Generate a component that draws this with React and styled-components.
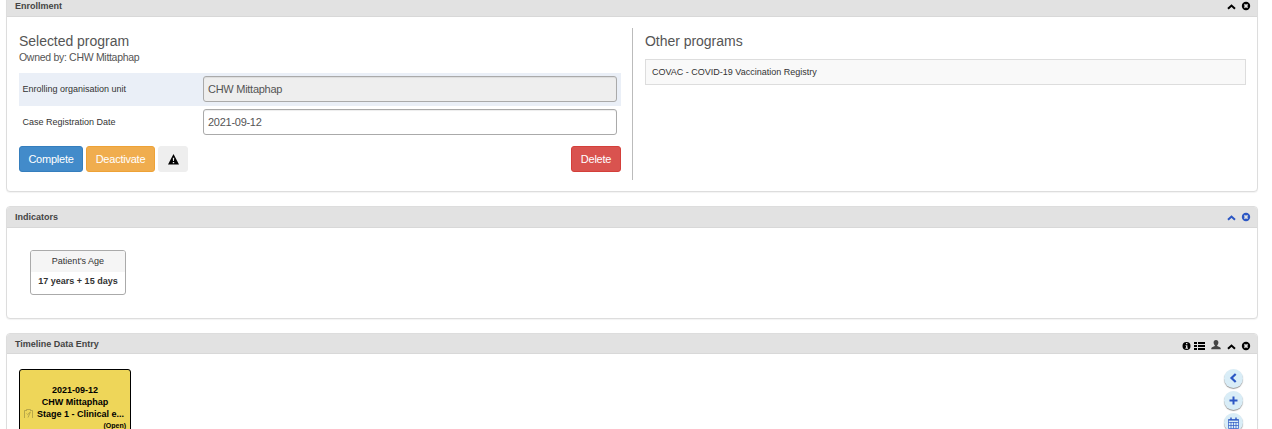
import React from "react";
import styled, { createGlobalStyle } from "styled-components";

const Global = createGlobalStyle`
  *, *::before, *::after { box-sizing: border-box; }
  html, body { margin: 0; background: #fff; overflow: hidden; }
  body { font-family: "Liberation Sans", Arial, sans-serif; font-size: 9px; color: #333; }
`;

const Page = styled.div`
  height: 429px;
  overflow: hidden;
`;

const Stack = styled.main`
  display: flex;
  flex-direction: column;
  gap: 14px;
  width: 1252px;
  margin: -5px 0 0 6px;
`;

const Panel = styled.section`
  flex: none;
  height: ${(p) => p.$height}px;
  border: 1px solid #ddd;
  border-radius: 4px;
  background: #fff;
  box-shadow: 0 1px 1px rgba(0, 0, 0, 0.05);
`;

const PanelHeader = styled.header`
  display: flex;
  justify-content: space-between;
  height: ${(p) => p.$height}px;
  padding: 0 6px 0 8px;
  border-bottom: 1px solid #d8d8d8;
  border-radius: 3px 3px 0 0;
  background: #e2e2e2;
  line-height: 20px;
  font-weight: bold;
  color: #444;
`;

const HeaderIcons = styled.div`
  display: flex;
  align-items: center;
  padding-top: ${(p) => p.$drop || 0}px;
  color: ${(p) => p.$color || "#000"};
  svg { display: block; }
`;

const ListSlot = styled.span`
  margin-left: 3px;
`;

const PersonSlot = styled.span`
  margin: 0 3px 2px 6px;
`;

const EnrollBody = styled.div`
  display: flex;
  padding: 11px 11px 0 12px;
`;

const Selected = styled.div`
  width: 614px;
  height: 152px;
  padding-right: 11px;
  border-right: 1px solid #bbb;
`;

const Others = styled.div`
  flex: 1;
  padding-left: 12px;
`;

const Title = styled.h2`
  margin: 0;
  padding-top: 4px;
  font-size: 14px;
  line-height: 18px;
  font-weight: normal;
  letter-spacing: -0.03px;
  color: #555;
`;

const Owner = styled.p`
  margin: 0 0 8px;
  font-size: 10.5px;
  line-height: 15px;
  letter-spacing: -0.3px;
  color: #555;
`;

const Field = styled.div`
  display: flex;
  align-items: center;
  height: 33px;
  padding: 0 4px 1px 3.5px;
  background: ${(p) => (p.$shaded ? "#eaeff7" : "#fff")};
`;

const Label = styled.label`
  flex: 1;
`;

const Input = styled.div`
  width: 414px;
  height: 26px;
  padding: 0 4px;
  border: 1px solid #aaa;
  border-radius: 3px;
  background: ${(p) => (p.$disabled ? "#eee" : "#fff")};
  box-shadow: inset 0 1px 1px rgba(0, 0, 0, 0.075);
  font-size: 11px;
  line-height: 25px;
  letter-spacing: -0.27px;
  color: #555;
`;

const Actions = styled.div`
  display: flex;
  gap: 3px;
  margin-top: 7px;
`;

const Button = styled.button`
  display: flex;
  align-items: center;
  justify-content: center;
  width: ${(p) => p.$width}px;
  height: 26px;
  margin: 0 0 0 ${(p) => (p.$end ? "auto" : "0")};
  padding: 0;
  border: 1px solid ${(p) => p.$edge};
  border-radius: 3px;
  background: ${(p) => p.$fill};
  font: 11px "Liberation Sans", Arial, sans-serif;
  letter-spacing: -0.23px;
  color: #fff;
`;

const ProgramRow = styled.div`
  height: 26px;
  margin-top: 9px;
  padding-left: 6px;
  border: 1px solid #ddd;
  background: #f9f9f9;
  line-height: 25px;
`;

const Indicator = styled.div`
  width: 96px;
  height: 45px;
  margin: 22px 0 0 23px;
  border: 1px solid #aaa;
  border-radius: 3px;
  overflow: hidden;
  text-align: center;
`;

const IndicatorName = styled.div`
  height: 21px;
  line-height: 21px;
  background: #f5f5f5;
`;

const IndicatorValue = styled.div`
  line-height: 19px;
  font-weight: bold;
`;

const TimelineBody = styled.div`
  display: flex;
  justify-content: space-between;
  padding: 15px 14px 0 12px;
`;

const Event = styled.div`
  width: 112px;
  height: 72px;
  padding: 14px 4px 0;
  border: 1px solid #000;
  border-radius: 3px;
  background: #eed659;
  color: #000;
  font-weight: bold;
  line-height: 12px;
  text-align: center;
`;

const Stage = styled.div`
  display: flex;
  gap: 4px;
  white-space: nowrap;
`;

const Status = styled.div`
  font-size: 7px;
  line-height: 11px;
  text-align: right;
`;

const Tools = styled.div`
  display: flex;
  flex-direction: column;
  gap: 3px;
`;

const Round = styled.div`
  display: flex;
  align-items: center;
  justify-content: center;
  width: 19px;
  height: 19px;
  border-radius: 50%;
  background: #d9edf7;
  box-shadow: 0 1px 1px #999;
  color: #2c57c4;
`;

const Up = () => (
  <svg width="17" height="10" viewBox="0 0 17 10" fill="none">
    <path d="M4 7.800 7.500 4.500l3.500 3.300" stroke="currentColor" strokeWidth="2" />
  </svg>
);

const Close = () => (
  <svg width="10" height="10" viewBox="0 0 10 10">
    <circle cx="5" cy="5" r="4.200" fill="currentColor" />
    <path d="m3.400 3.400 3.200 3.200m0-3.200-3.200 3.200" stroke="#e2e2e2" strokeWidth="1.500" />
  </svg>
);

const Info = () => (
  <svg width="9" height="10" viewBox="0 0 9 10">
    <circle cx="4.500" cy="5" r="4" fill="currentColor" />
    <path d="M4 2h1.400v1.200H4zM3.500 4.200h1.900v2.600H6v.9H3.400v-.9H4V5h-.5z" fill="#e2e2e2" />
  </svg>
);

const List = () => (
  <svg width="11" height="10" viewBox="0 0 11 10" fill="currentColor">
    <path d="M0 1h3v2H0zM4 1h7v2H4zM0 4h3v2H0zM4 4h7v2H4zM0 7h3v2H0zM4 7h7v2H4z" />
  </svg>
);

const Person = () => (
  <svg width="10" height="10" viewBox="0 0 10 10" fill="#444">
    <path d="M5 0c1.600 0 2.400 1 2.400 2.400 0 1.200-.5 2.200-1.200 2.800v.9l2.700 1.100c.5.2.8.6.8 1V9.200H.3v-1c0-.4.3-.8.8-1l2.700-1.100v-.9C3.100 4.600 2.600 3.600 2.600 2.400 2.600 1 3.400 0 5 0z" />
  </svg>
);

const Warning = () => (
  <svg width="13" height="11" viewBox="0 0 12 11">
    <path d="M6 0 11.500 10.500H.5z" fill="#000" />
    <path d="M5.300 3.700h1.400l-.2 3.200h-1zM5.300 7.900h1.400v1.300H5.300z" fill="#eee" />
  </svg>
);

const Clipboard = () => (
  <svg width="9" height="11" viewBox="0 0 9 11" fill="none" stroke="#a99a45" strokeWidth=".8">
    <path d="M2 2.500H.5v7.500M7 2.500h1.500v7.500M2.500 3V1.500h4V3M2.600 5.500l1 1 2.800-2.500L4 9.500" />
  </svg>
);

const Left = () => (
  <svg width="11" height="11" viewBox="0 0 11 11" fill="none">
    <path d="M7.700 1 3.500 5l4.200 4" stroke="currentColor" strokeWidth="2.200" />
  </svg>
);

const Plus = () => (
  <svg width="9" height="9" viewBox="0 0 9 9">
    <path d="M.5 3.500h3v-3h2v3h3v2h-3v3h-2v-3h-3z" fill="currentColor" />
  </svg>
);

const Calendar = () => (
  <svg width="11" height="12" viewBox="0 0 11 12" fill="none" stroke="currentColor">
    <path d="M.5 2.500h10v9H.5zM.5 5.500h10M.5 8.500h10M3 5v6.500M5.500 5v6.500M8 5v6.500" strokeWidth=".7" />
    <path d="M.5 3h10" strokeWidth="1.200" />
    <path d="M3 .5v2.500M8 .5v2.500" strokeWidth="1.400" />
  </svg>
);

export default function App() {
  return (
    <Page>
      <Global />
      <Stack>
        <Panel $height={197}>
          <PanelHeader $height={21}>
            <span>Enrollment</span>
            <HeaderIcons><Up /><Close /></HeaderIcons>
          </PanelHeader>
          <EnrollBody>
            <Selected>
              <Title>Selected program</Title>
              <Owner>Owned by: CHW Mittaphap</Owner>
              <Field $shaded>
                <Label>Enrolling organisation unit</Label>
                <Input $disabled>CHW Mittaphap</Input>
              </Field>
              <Field>
                <Label>Case Registration Date</Label>
                <Input>2021-09-12</Input>
              </Field>
              <Actions>
                <Button $width={64} $fill="#428bca" $edge="#357ebd">Complete</Button>
                <Button $width={69} $fill="#f0ad4e" $edge="#eea236">Deactivate</Button>
                <Button $width={30} $fill="#eee" $edge="#eee" aria-label="Warning"><Warning /></Button>
                <Button $width={50} $fill="#d9534f" $edge="#d43f3a" $end>Delete</Button>
              </Actions>
            </Selected>
            <Others>
              <Title>Other programs</Title>
              <ProgramRow>COVAC - COVID-19 Vaccination Registry</ProgramRow>
            </Others>
          </EnrollBody>
        </Panel>

        <Panel $height={113}>
          <PanelHeader $height={21}>
            <span>Indicators</span>
            <HeaderIcons $color="#2c57c4"><Up /><Close /></HeaderIcons>
          </PanelHeader>
          <Indicator>
            <IndicatorName>Patient's Age</IndicatorName>
            <IndicatorValue>17 years + 15 days</IndicatorValue>
          </Indicator>
        </Panel>

        <Panel $height={130}>
          <PanelHeader $height={20}>
            <span>Timeline Data Entry</span>
            <HeaderIcons $drop={4}>
              <Info />
              <ListSlot><List /></ListSlot>
              <PersonSlot><Person /></PersonSlot>
              <Up />
              <Close />
            </HeaderIcons>
          </PanelHeader>
          <TimelineBody>
            <Event>
              <div>2021-09-12</div>
              <div>CHW Mittaphap</div>
              <Stage><Clipboard /><span>Stage 1 - Clinical e...</span></Stage>
              <Status>(Open)</Status>
            </Event>
            <Tools>
              <Round><Left /></Round>
              <Round><Plus /></Round>
              <Round><Calendar /></Round>
            </Tools>
          </TimelineBody>
        </Panel>
      </Stack>
    </Page>
  );
}
